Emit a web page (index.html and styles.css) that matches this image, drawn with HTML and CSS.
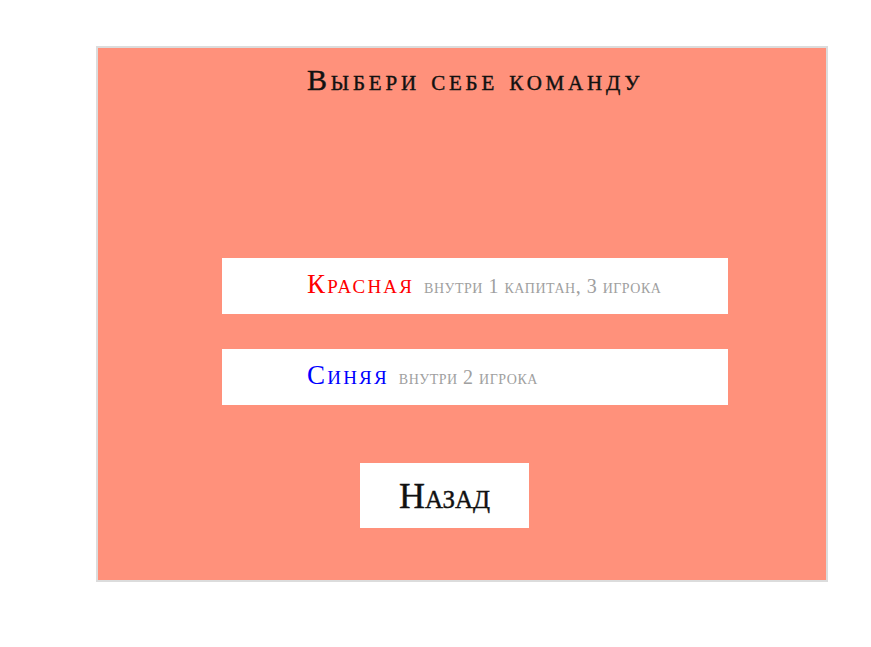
FILE: index.html
```html
<!DOCTYPE html>
<html lang="ru">
<head>
<meta charset="utf-8">
<link rel="stylesheet" href="styles.css">
</head>
<body>
<div class="panel">
  <h1 class="title">Выбери себе команду</h1>
  <div class="teams">
    <div class="team"><span class="name red">Красная</span><span class="info">внутри 1 капитан, 3 игрока</span></div>
    <div class="team"><span class="name blue">Синяя</span><span class="info">внутри 2 игрока</span></div>
  </div>
  <div class="back">Назад</div>
</div>
</body>
</html>
```
FILE: styles.css
```css
html, body { margin: 0; padding: 0; background: #fff; }
body { font-family: "Liberation Serif", "DejaVu Serif", serif; }
.panel {
  margin: 46px 0 0 96px;
  width: 728px;
  height: 532px;
  background: #ff917b;
  border: 2px solid #dcdcdc;
  display: flex;
  flex-direction: column;
}
.title {
  margin: 14px 0 0 209px;
  font-size: 30px;
  font-weight: normal;
  font-variant: small-caps;
  letter-spacing: 3.8px;
  color: #111;
  line-height: 36px;
  -webkit-text-stroke: 0.4px #111;
}
.teams {
  margin: 160px 0 0 124px;
  display: flex;
  flex-direction: column;
  gap: 35px;
}
.team {
  height: 56px;
  box-sizing: border-box;
  width: 506px;
  background: #fff;
  padding: 0 0 3px 85px;
  display: flex;
  align-items: baseline;
  align-content: center;
  flex-wrap: wrap;
  gap: 10px;
}
.name { font-size: 27px; font-variant: small-caps; letter-spacing: 2.2px; }
.red { color: #f00; }
.blue { color: #0000ff; }
.info { font-size: 20px; font-variant: small-caps; letter-spacing: 0.5px; color: #a0a0a0; }
.back {
  margin: 58px 0 0 262px;
  width: 169px;
  height: 65px;
  background: #fff;
  display: flex;
  align-items: center;
  justify-content: center;
  font-size: 36px;
  font-variant: small-caps;
  color: #111;
  -webkit-text-stroke: 0.4px #111;
}
```
